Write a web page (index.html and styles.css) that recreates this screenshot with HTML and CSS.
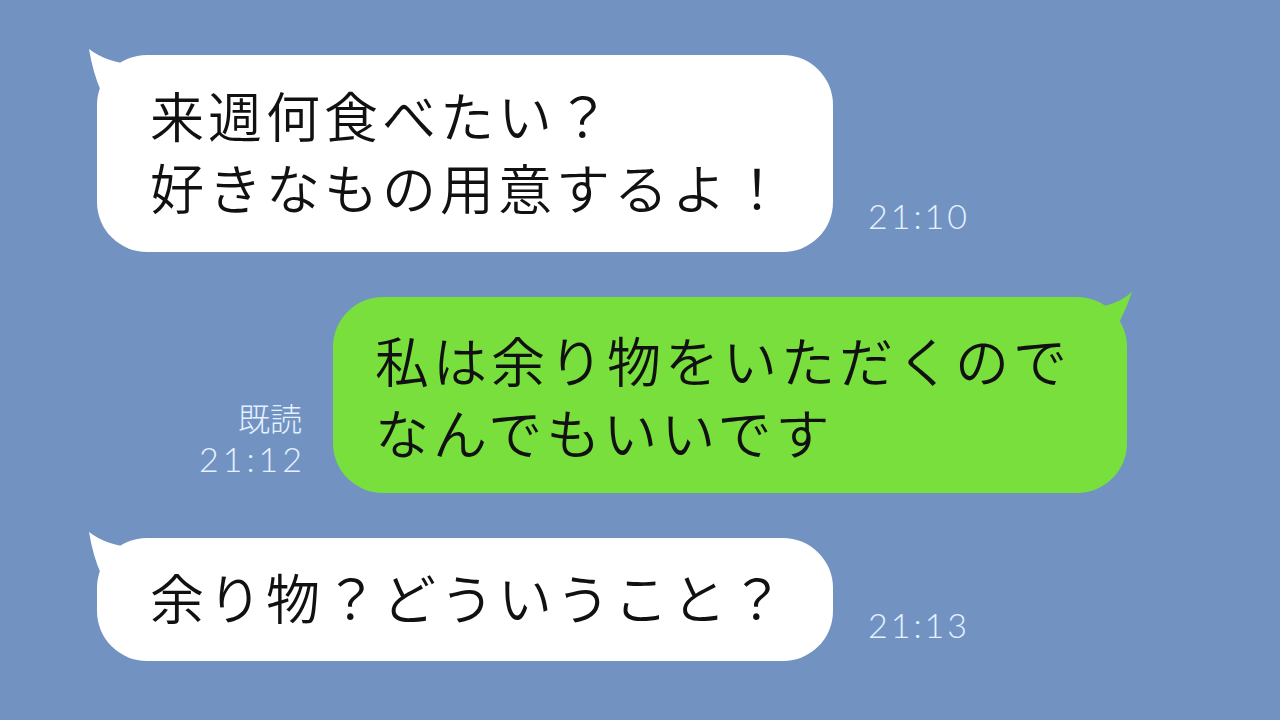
FILE: index.html
```html
<!DOCTYPE html>
<html lang="ja">
<head>
  <meta charset="UTF-8">
  <meta name="viewport" content="width=device-width, initial-scale=1.0">
  <title>トーク</title>
  <link rel="stylesheet" href="styles.css">
</head>
<body>
  <div class="talk">

    <div class="row left">
      <div class="bubble white wide">
        <svg class="tail tail-left" viewBox="-10 -10 50 50"><path d="M -8 -6 Q -4 18 4 36 L 40 40 L 40 10 Q 10 8 -8 -6 Z"/></svg>
        <p>来週何食べたい？<br>好きなもの用意するよ！</p>
      </div>
      <span class="time">21:10</span>
    </div>

    <div class="row right">
      <div class="meta">
        <span class="read">既読</span>
        <span class="time-mine">21:12</span>
      </div>
      <div class="bubble green">
        <svg class="tail tail-right" viewBox="-40 -10 50 50"><path d="M 5 -5 Q 0 10 -8 26 L -40 40 L -40 10 Q -15 12 5 -5 Z"/></svg>
        <p>私は余り物をいただくので<br>なんでもいいです</p>
      </div>
    </div>

    <div class="row left">
      <div class="bubble white wide short">
        <svg class="tail tail-left" viewBox="-10 -10 50 50"><path d="M -8 -6 Q -4 18 4 36 L 40 40 L 40 10 Q 10 8 -8 -6 Z"/></svg>
        <p>余り物？どういうこと？</p>
      </div>
      <span class="time">21:13</span>
    </div>

  </div>
</body>
</html>
```

FILE: styles.css
```css
html, body {
  margin: 0;
  padding: 0;
  height: 100%;
}
body {
  background-color: #7293c2;
  font-family: "Noto Sans CJK JP", "Noto Sans", sans-serif;
  overflow: hidden;
}
.talk {
  display: flex;
  flex-direction: column;
  gap: 45px;
  padding-top: 55px;
}
.row {
  display: flex;
  align-items: flex-end;
}
.row.left {
  padding-left: 97px;
}
.row.right {
  justify-content: flex-end;
  padding-right: 153px;
}
.bubble {
  position: relative;
  box-sizing: border-box;
  border-radius: 50px;
  color: #111;
}
.bubble p {
  margin: 0;
  font-size: 54px;
  font-weight: 350;
  line-height: 72px;
  letter-spacing: 4px;
  white-space: nowrap;
}
.white {
  background-color: #fff;
  fill: #fff;
}
.green {
  background-color: #79df3d;
  fill: #79df3d;
  width: 794px;
  height: 196px;
  padding: 27px 0 0 42px;
}
.wide {
  width: 736px;
  height: 197px;
  padding: 24px 0 0 53px;
}
.wide.short {
  height: 123px;
  padding-top: 23px;
}
.tail {
  position: absolute;
  top: -10px;
  width: 50px;
  height: 50px;
}
.tail-left {
  left: -10px;
}
.tail-right {
  right: -10px;
}
.time {
  margin-left: 35px;
  margin-bottom: 18px;
  font-family: Lato, "Noto Sans", sans-serif;
  font-weight: 300;
  font-size: 34px;
  line-height: 36px;
  letter-spacing: 3px;
  color: #e4f1ff;
}
.meta {
  display: flex;
  flex-direction: column;
  align-items: flex-end;
  margin-right: 31px;
  margin-bottom: 12px;
  color: #e4f1ff;
}
.read {
  font-size: 32px;
  font-weight: 300;
  line-height: 40px;
}
.time-mine {
  font-family: Lato, "Noto Sans", sans-serif;
  font-weight: 300;
  font-size: 34px;
  line-height: 44px;
  letter-spacing: 4px;
  margin-right: -4px;
}
```
